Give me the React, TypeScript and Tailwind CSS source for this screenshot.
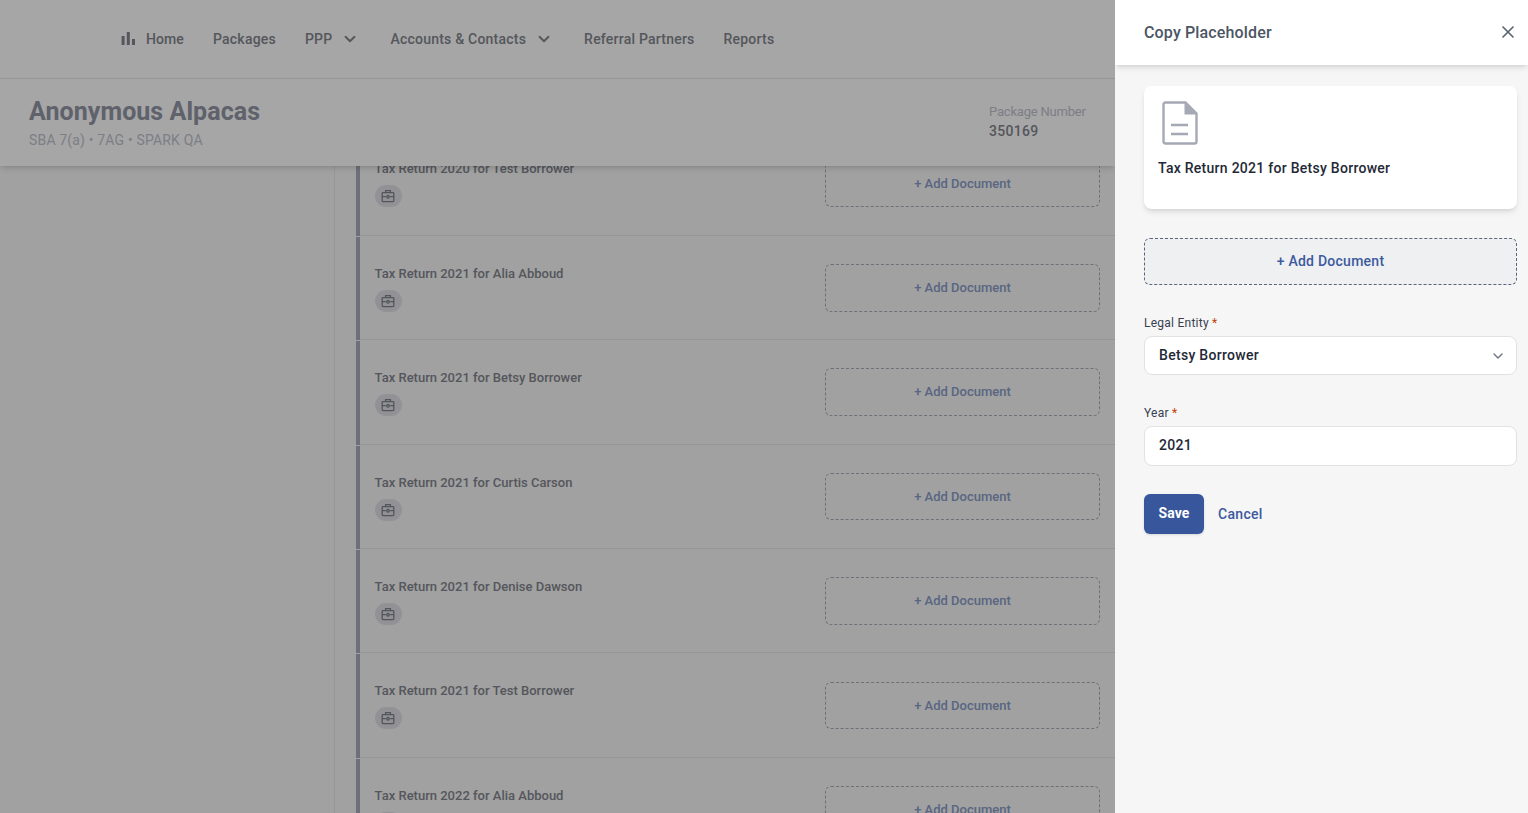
import { ChevronDown, X } from 'lucide-react'

const rows = [
  'Tax Return 2020 for Test Borrower',
  'Tax Return 2021 for Alia Abboud',
  'Tax Return 2021 for Betsy Borrower',
  'Tax Return 2021 for Curtis Carson',
  'Tax Return 2021 for Denise Dawson',
  'Tax Return 2021 for Test Borrower',
  'Tax Return 2022 for Alia Abboud',
]

const BarsIcon = () => (
  <svg width="16" height="16" viewBox="0 0 16 16" className="fill-[#83868e]">
    <rect x="1.6" y="5" width="3" height="9" />
    <rect x="6.8" y="1" width="3" height="13" />
    <rect x="12" y="8" width="3" height="6" />
  </svg>
)

const CaseIcon = () => (
  <svg width="14" height="14" viewBox="0 0 14 14" fill="none" className="stroke-[#7f838e]" strokeWidth="1.3">
    <rect x="1.2" y="3.6" width="11.6" height="9" rx="0.8" />
    <path d="M4.6 3.6V1.6h4.8v2M1.2 7.6h3.6M9.2 7.6h3.6" />
    <circle cx="7" cy="7.8" r="1.3" />
  </svg>
)

const DocIcon = () => (
  <svg width="36" height="44" viewBox="0 0 36 44" fill="none">
    <path d="M3.5 1.5h20l11 11v28a2 2 0 0 1-2 2h-29a2 2 0 0 1-2-2v-37a2 2 0 0 1 2-2z" stroke="#a5a9b5" strokeWidth="2.4" />
    <path d="M22.5 1.5l12 12h-12z" fill="#a5a9b5" />
    <path d="M9 24h17M9 33h17" stroke="#a5a9b5" strokeWidth="2.4" />
  </svg>
)

const NavItem = ({ label, caret }: { label: string; caret?: boolean }) => (
  <div className="flex items-center text-sm font-medium tracking-[0.22px] text-[#83868e]">
    {label}
    {caret && <ChevronDown size={18} strokeWidth={2.5} className="ml-[9px] mr-[2px] text-[#83868e]" />}
  </div>
)

const Row = ({ title }: { title: string }) => (
  <div className="flex h-[104.4px] shrink-0 border-b border-[#e5e7eb]">
    <div className="mb-[-1px] mt-[1px] w-1 shrink-0 bg-[#a9adbb]" />
    <div className="flex flex-1 justify-between pl-[14.6px] pr-[15px] pt-7">
      <div>
        <div className="text-[13px] leading-5 font-medium text-[#83868e]">{title}</div>
        <div className="mt-[6px] flex h-[22px] w-[27px] items-center justify-center rounded-full bg-[#e0e1e6]">
          <CaseIcon />
        </div>
      </div>
      <div className="mt-[0.3px] flex h-[47.5px] w-[275px] items-center justify-center rounded-md border border-dashed border-[#a9acb9] text-[13px] font-medium text-[#8a9cc8]">
        + Add Document
      </div>
    </div>
  </div>
)

const App = () => {
  return (
    <div className="flex h-[813px] w-[1528px] overflow-hidden bg-[#f7f7f7] font-['Roboto',sans-serif]">
      <div className="relative flex w-[1115px] shrink-0 flex-col overflow-hidden">
        <div className="z-10 shrink-0 bg-white shadow-md">
          <div className="flex h-[79px] items-center gap-[29px] border-b border-[#e5e7eb] pl-[120px]">
            <div className="flex items-center gap-[10px] text-sm font-medium tracking-[0.1px] text-[#83868e]">
              <BarsIcon />
              Home
            </div>
            <NavItem label="Packages" />
            <NavItem label="PPP" caret />
            <NavItem label="Accounts & Contacts" caret />
            <NavItem label="Referral Partners" />
            <NavItem label="Reports" />
          </div>
          <div className="flex h-[87px] justify-between pl-[29px]">
            <div className="pt-[15px]">
              <div className="text-[25px] leading-[36px] font-bold tracking-[0.06px] text-[#9295a5]">Anonymous Alpacas</div>
              <div className="text-sm leading-5 tracking-[0.17px] text-[#c0c3cd]">SBA 7(a) • 7AG • SPARK QA</div>
            </div>
            <div className="w-[126px] pt-[24px]">
              <div className="text-[13px] leading-[18px] tracking-[-0.2px] text-[#c0c3cd]">Package Number</div>
              <div className="text-sm leading-5 font-medium tracking-[0.3px] text-[#83868e]">350169</div>
            </div>
          </div>
        </div>
        <div className="flex min-h-0 flex-1">
          <div className="w-[335px] shrink-0 border-r border-[#e5e7eb]" />
          <div className="ml-[21px] mt-[-34.6px] flex min-w-0 flex-1 flex-col">
            {rows.map((r) => (
              <Row key={r} title={r} />
            ))}
          </div>
        </div>
        <div className="absolute inset-0 z-20 bg-black/35" />
      </div>

      <div className="flex w-[413px] shrink-0 flex-col bg-[#f6f6f6]">
        <div className="flex h-[65px] items-center justify-between bg-white pl-[29px] pr-[10px] shadow-md">
          <div className="text-base font-medium tracking-[0.15px] text-[#4b5563]">Copy Placeholder</div>
          <X size={20} strokeWidth={2} className="-mt-[1px] text-[#5b6270]" />
        </div>
        <div className="flex flex-col pl-[29px] pr-[11px] pt-[21px]">
          <div className="h-[123px] rounded-lg bg-white pl-[14px] pt-[15px] shadow-md">
            <div className="ml-[4px]">
              <DocIcon />
            </div>
            <div className="mt-[13px] text-sm leading-5 font-medium tracking-[0.27px] text-[#1f2937]">
              Tax Return 2021 for Betsy Borrower
            </div>
          </div>
          <div className="mt-[29px] flex h-[47px] items-center justify-center rounded-md border border-dashed border-[#5b6478] bg-[#eff0f2] pb-[2px] text-sm font-medium tracking-[0.25px] text-[#3d5a9e]">
            + Add Document
          </div>
          <div className="mt-[30px] text-xs leading-4 tracking-[0.25px] text-[#374151]">
            Legal Entity <span className="text-[#c2410c]">*</span>
          </div>
          <div className="mt-[5px] flex h-[39px] items-center justify-between rounded-lg border border-[#e0e2e6] bg-white pb-[2px] pl-[14px] pr-[10px] text-sm font-medium tracking-[0.3px] text-[#1f2937]">
            Betsy Borrower
            <ChevronDown size={16} strokeWidth={2} className="mt-[2px] text-[#6b7280]" />
          </div>
          <div className="mt-[30px] text-xs leading-4 tracking-[0.25px] text-[#374151]">
            Year <span className="text-[#c2410c]">*</span>
          </div>
          <div className="mt-[5px] flex h-[40px] items-center rounded-lg border border-[#e0e2e6] bg-white pb-[2px] pl-[14px] text-sm font-medium tracking-[0.3px] text-[#1f2937]">
            2021
          </div>
          <div className="mt-[28px] flex items-center gap-[14px]">
            <div className="flex h-[40px] w-[60px] items-center justify-center rounded-md bg-[#37569b] pb-[2px] text-sm font-bold tracking-[0.1px] text-white shadow-sm">
              Save
            </div>
            <div className="text-sm font-medium tracking-[0.3px] text-[#3d5a9e]">Cancel</div>
          </div>
        </div>
      </div>
    </div>
  )
}

export default App
